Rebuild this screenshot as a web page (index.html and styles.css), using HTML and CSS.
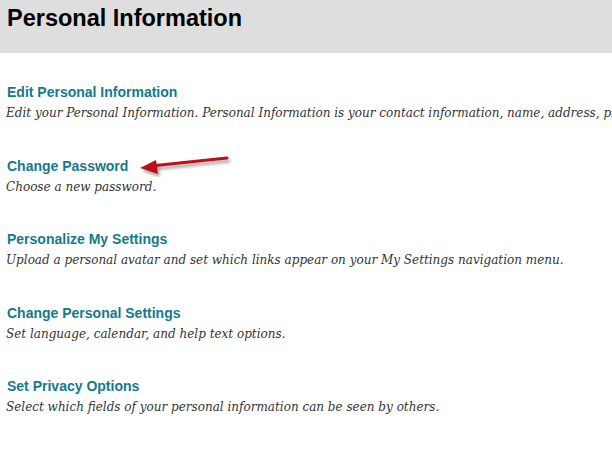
FILE: index.html
```html
<!DOCTYPE html>
<html lang="en">
<head>
    <meta charset="UTF-8">
    <title>Personal Information</title>
    <link rel="stylesheet" href="styles.css">
</head>
<body>
    <header class="page-header">
        <h1>Personal Information</h1>
    </header>

    <ul class="options">
        <li class="option">
            <a href="#">Edit Personal Information</a>
            <p>Edit your Personal Information. Personal Information is your contact information, name, address, phone number and email.</p>
        </li>
        <li class="option">
            <a href="#">Change Password</a>
            <p>Choose a new password.</p>
            <svg class="callout" width="100" height="26" viewBox="0 0 100 26">
                <defs>
                    <filter id="shade" x="-20%" y="-50%" width="140%" height="200%">
                        <feDropShadow dx="2" dy="3" stdDeviation="1.6" flood-color="#000" flood-opacity="0.35"/>
                    </filter>
                </defs>
                <g filter="url(#shade)">
                    <line x1="14" y1="15" x2="90" y2="7" stroke="#c0101a" stroke-width="3" stroke-linecap="round"/>
                    <polygon points="3,17 19,9 21,23" fill="#c0101a"/>
                </g>
            </svg>
        </li>
        <li class="option">
            <a href="#">Personalize My Settings</a>
            <p>Upload a personal avatar and set which links appear on your My Settings navigation menu.</p>
        </li>
        <li class="option">
            <a href="#">Change Personal Settings</a>
            <p>Set language, calendar, and help text options.</p>
        </li>
        <li class="option">
            <a href="#">Set Privacy Options</a>
            <p>Select which fields of your personal information can be seen by others.</p>
        </li>
    </ul>
</body>
</html>
```

FILE: styles.css
```css
body {
    margin: 0;
    padding: 0;
    background: #fff;
    overflow: hidden;
    font-family: "Liberation Sans", Arial, sans-serif;
}

.page-header {
    background: #dedede;
    height: 53px;
    padding: 0 7px;
}

.page-header h1 {
    margin: 0;
    padding-top: 5px;
    font-size: 23.5px;
    font-weight: bold;
    color: #000;
}

.options {
    list-style: none;
    margin: 0;
    padding: 30px 0 0 6px;
    overflow: hidden;
}

.option {
    position: relative;
    height: 73.5px;
}

.option a {
    display: block;
    font-size: 14px;
    font-weight: bold;
    color: #137a8c;
    text-decoration: none;
    padding-left: 1px;
    line-height: 18px;
}

.option p {
    margin: 4px 0 0;
    font-family: "DejaVu Serif", Georgia, serif;
    font-style: italic;
    font-size: 12px;
    color: #333;
    white-space: nowrap;
    overflow: hidden;
    line-height: 16px;
}

.callout {
    position: absolute;
    left: 131px;
    top: -6px;
}
```
